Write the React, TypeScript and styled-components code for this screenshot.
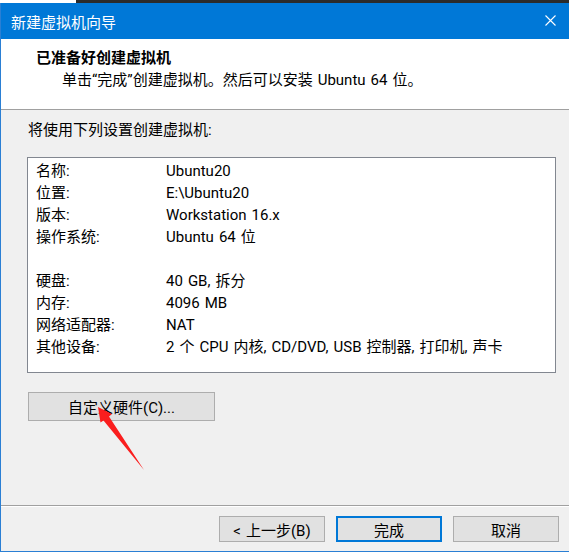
import React from 'react';
import styled, { createGlobalStyle } from 'styled-components';

const GlobalStyle = createGlobalStyle`
  html, body {
    margin: 0;
    padding: 0;
    background: #f0f0f0;
  }
  body {
    font-family: Roboto, "Noto Sans CJK SC", sans-serif;
    font-size: 15px;
    word-spacing: 1.3px;
    color: #000;
  }
`;

const Window = styled.div`
  position: relative;
  width: 569px;
  height: 552px;
  box-sizing: border-box;
  display: flex;
  flex-direction: column;
  background: #f0f0f0;
  border-left: 1px solid #2a7fd4;
  border-bottom: 1px solid #2a7fd4;
`;

const TopStrip = styled.div`
  display: flex;
  height: 3px;
  margin-left: -1px;
`;

const StripPart = styled.div<{ $dark?: boolean }>`
  width: ${(p) => (p.$dark ? 'auto' : '76px')};
  flex: ${(p) => (p.$dark ? '1' : 'none')};
  background: ${(p) => (p.$dark ? '#2b2b2b' : '#ffffff')};
`;

const TitleBar = styled.div`
  height: 36px;
  display: flex;
  align-items: center;
  justify-content: space-between;
  padding: 0 13px 0 10px;
  background: #0078d7;
  color: #fff;
  font-size: 15px;
`;

const CloseIcon = styled.svg`
  width: 11px;
  height: 11px;
  margin-top: -2px;
`;

const Header = styled.div`
  height: 71px;
  box-sizing: border-box;
  padding: 9px 0 0 35px;
  background: #fff;
  border-bottom: 1px solid #a0a0a0;
  h3 {
    margin: 0;
    font-size: 15px;
    font-weight: bold;
    line-height: 20px;
  }
  p {
    margin: 0;
    padding-left: 26px;
    line-height: 24px;
  }
`;

const Body = styled.div`
  flex: 1;
  padding: 9px 13px 0 26px;
`;

const Intro = styled.div`
  line-height: 22px;
  padding-left: 1px;
`;

const SummaryBox = styled.div`
  margin-top: 16px;
  height: 216px;
  box-sizing: border-box;
  padding: 2px 0 0 8px;
  background: #fff;
  border: 1px solid #828790;
`;

const Row = styled.div`
  display: flex;
  height: 22px;
  line-height: 22px;
`;

const Label = styled.span`
  width: 130px;
  flex: none;
`;

const Button = styled.button<{ $primary?: boolean; $width?: number; $height?: number }>`
  width: ${(p) => p.$width ?? 106}px;
  height: ${(p) => p.$height ?? 26}px;
  box-sizing: border-box;
  padding: 0;
  font: inherit;
  word-spacing: inherit;
  color: #000;
  background: #e1e1e1;
  border: ${(p) => (p.$primary ? '2px solid #0078d7' : '1px solid #adadad')};
`;

const CustomButton = styled(Button)`
  margin: 19px 0 0 1px;
  display: block;
`;

const Footer = styled.div`
  height: 46px;
  box-sizing: border-box;
  display: flex;
  justify-content: flex-end;
  gap: 11px;
  padding: 10px 10px 0 0;
  border-top: 1px solid #a0a0a0;
  box-shadow: inset 0 1px 0 #ffffff;
`;

const Arrow = styled.svg`
  position: absolute;
  left: 0;
  top: 0;
  width: 569px;
  height: 552px;
  pointer-events: none;
`;

const firstGroup: [string, string][] = [
  ['名称:', 'Ubuntu20'],
  ['位置:', 'E:\\Ubuntu20'],
  ['版本:', 'Workstation 16.x'],
  ['操作系统:', 'Ubuntu 64 位'],
];

const secondGroup: [string, string][] = [
  ['硬盘:', '40 GB, 拆分'],
  ['内存:', '4096 MB'],
  ['网络适配器:', 'NAT'],
  ['其他设备:', '2 个 CPU 内核, CD/DVD, USB 控制器, 打印机, 声卡'],
];

const App = () => {
  return (
    <>
      <GlobalStyle />
      <Window>
        <TopStrip>
          <StripPart />
          <StripPart $dark />
        </TopStrip>
        <TitleBar>
          <span>新建虚拟机向导</span>
          <CloseIcon viewBox="0 0 11 11">
            <path d="M0.5 0.5 L10.5 10.5 M10.5 0.5 L0.5 10.5" stroke="#fff" strokeWidth="1.1" />
          </CloseIcon>
        </TitleBar>
        <Header>
          <h3>已准备好创建虚拟机</h3>
          <p>单击“完成”创建虚拟机。然后可以安装 Ubuntu 64 位。</p>
        </Header>
        <Body>
          <Intro>将使用下列设置创建虚拟机:</Intro>
          <SummaryBox>
            {firstGroup.map(([k, v]) => (
              <Row key={k}>
                <Label>{k}</Label>
                <span>{v}</span>
              </Row>
            ))}
            <Row />
            {secondGroup.map(([k, v]) => (
              <Row key={k}>
                <Label>{k}</Label>
                <span>{v}</span>
              </Row>
            ))}
          </SummaryBox>
          <CustomButton $width={187} $height={29}>
            自定义硬件(C)...
          </CustomButton>
        </Body>
        <Footer>
          <Button>&lt; 上一步(B)</Button>
          <Button $primary>完成</Button>
          <Button>取消</Button>
        </Footer>
        <Arrow viewBox="0 0 569 552">
          <polygon
            points="97,407 111,414 108,416.5 143,470 102.5,420.5 99.5,422.5"
            fill="#fa1e1e"
          />
        </Arrow>
      </Window>
    </>
  );
};

export default App;
